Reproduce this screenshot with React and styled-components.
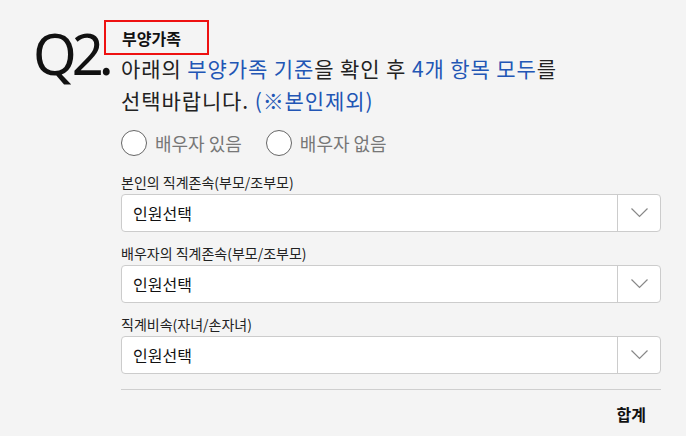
import React, { useState } from 'react';
import styled, { createGlobalStyle } from 'styled-components';

const GlobalStyle = createGlobalStyle`
  body {
    margin: 0;
    background: #f4f4f4;
    font-family: "Noto Sans CJK KR", "Noto Sans", sans-serif;
    color: #222;
  }
`;

const Page = styled.div`
  display: flex;
  padding-top: 20px;
  height: 436px;
  box-sizing: border-box;
`;

const QMark = styled.div`
  width: 121px;
  padding-left: 33px;
  box-sizing: border-box;
  font-family: "Noto Sans", sans-serif;
  font-size: 56px;
  font-weight: 400;
  letter-spacing: -5px;
  line-height: 1;
  padding-top: 5px;
  color: #111;
`;

const Content = styled.div`
  width: 540px;
  display: flex;
  flex-direction: column;
`;

const Tag = styled.div`
  margin-left: -17px;
  width: 105px;
  height: 35px;
  box-sizing: border-box;
  border: 2px solid #ee1111;
  display: flex;
  align-items: center;
  padding-left: 16px;
  font-size: 16px;
  font-weight: 700;
  color: #111;
`;

const Question = styled.p`
  margin: -3px 0 0;
  font-size: 21px;
  line-height: 32px;
  letter-spacing: 0.9px;
  color: #222;
`;

const Em = styled.span`
  color: #2256b5;
`;

const RadioRow = styled.div`
  display: flex;
  gap: 24px;
  margin-top: 13px;
  height: 27px;
`;

const RadioLabel = styled.label`
  display: flex;
  align-items: center;
  gap: 8px;
  font-size: 18px;
  color: #777;
  cursor: pointer;
`;

const Circle = styled.span`
  width: 26px;
  height: 26px;
  border-radius: 50%;
  box-sizing: border-box;
  border: 1.5px solid #666;
  background: #fff;
  display: flex;
  align-items: center;
  justify-content: center;
  &::after {
    content: '';
    width: 12px;
    height: 12px;
    border-radius: 50%;
    background: ${(p) => (p.$on ? '#2256b5' : 'transparent')};
  }
`;

const Field = styled.div`
  margin-top: ${(p) => p.$top}px;
`;

const Label = styled.div`
  font-size: 14px;
  line-height: 20px;
  color: #222;
  margin-bottom: 2px;
`;

const Select = styled.div`
  height: 38px;
  box-sizing: border-box;
  border: 1px solid #cccccc;
  border-radius: 4px;
  background: #fff;
  display: flex;
  align-items: stretch;
`;

const SelectText = styled.div`
  flex: 1;
  display: flex;
  align-items: center;
  padding-left: 11px;
  font-size: 16px;
  color: #111;
`;

const Arrow = styled.div`
  width: 42px;
  border-left: 1px solid #cccccc;
  display: flex;
  align-items: center;
  justify-content: center;
`;

const Divider = styled.hr`
  margin: 15px 0 0;
  border: 0;
  border-top: 1px solid #cfcfcf;
`;

const Total = styled.div`
  text-align: right;
  padding-right: 15px;
  margin-top: 12px;
  font-size: 16px;
  font-weight: 700;
  color: #111;
`;

const Chevron = () => (
  <svg width="17" height="10" viewBox="0 0 17 10">
    <path d="M0.5 0.5 L8.5 8.5 L16.5 0.5" fill="none" stroke="#888" strokeWidth="1.2" />
  </svg>
);

const fields = [
  { label: '본인의 직계존속(부모/조부모)', top: 16 },
  { label: '배우자의 직계존속(부모/조부모)', top: 11 },
  { label: '직계비속(자녀/손자녀)', top: 11 },
];

const App = () => {
  const [spouse, setSpouse] = useState(null);

  return (
    <Page>
      <GlobalStyle />
      <QMark>Q2.</QMark>
      <Content>
        <Tag>부양가족</Tag>
        <Question>
          아래의 <Em>부양가족 기준</Em>을 확인 후 <Em>4개 항목 모두</Em>를<br />
          선택바랍니다. <Em>(※본인제외)</Em>
        </Question>
        <RadioRow>
          <RadioLabel onClick={() => setSpouse('yes')}>
            <Circle $on={spouse === 'yes'} />
            배우자 있음
          </RadioLabel>
          <RadioLabel onClick={() => setSpouse('no')}>
            <Circle $on={spouse === 'no'} />
            배우자 없음
          </RadioLabel>
        </RadioRow>
        {fields.map((f) => (
          <Field key={f.label} $top={f.top}>
            <Label>{f.label}</Label>
            <Select>
              <SelectText>인원선택</SelectText>
              <Arrow>
                <Chevron />
              </Arrow>
            </Select>
          </Field>
        ))}
        <Divider />
        <Total>합계</Total>
      </Content>
    </Page>
  );
};

export default App;
